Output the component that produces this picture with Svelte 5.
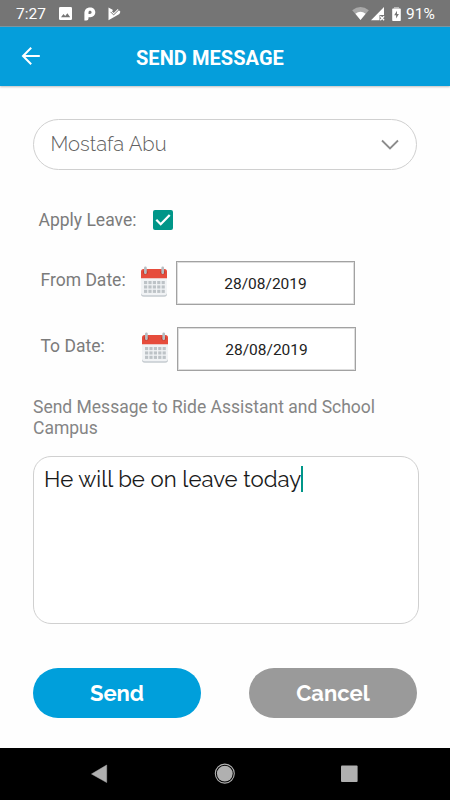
<script lang="ts">
	let recipient = $state('Mostafa Abu');
	let applyLeave = $state(true);
	let message = $state('He will be on leave today');

	const dates = [
		{ id: 'from', label: 'From Date:', value: '28/08/2019' },
		{ id: 'to', label: 'To Date:', value: '28/08/2019' }
	];

	// Day squares on the calendar icon
	const cols = [4, 8.4, 12.8, 17.2, 21.6];
	const rows = [15, 19.4, 23.8];
</script>

<div class="screen">
	<div class="status">
		<span class="clock">7:27</span>
		<svg class="photo" width="13" height="13" viewBox="0 0 13 13">
			<rect width="13" height="13" rx="1.3" fill="#fff" />
			<path d="M2 10.3 4.5 7l1.7 2 2.2-2.8 2.8 4.1z" fill="#757575" />
		</svg>
		<svg class="parking" width="12" height="14" viewBox="0 0 12 14">
			<path d="M.4 13.5V6.3C.4 2.5 2.8.4 6 .4s5.300 2 5.300 4.900-2.200 4.900-4.900 4.900H4.500v1.200q0 2.100-2.100 2.100zM4.500 7h1.300c1.100 0 1.800-.7 1.800-1.700s-.7-1.600-1.600-1.600-1.500.7-1.500 1.700z" fill="#fff" fill-rule="evenodd" />
		</svg>
		<svg class="play" width="13" height="14" viewBox="0 0 13 14">
			<path d="M.5.5 5 3.100 4 4.400l1.700 1.700L9.800 1.900l2.600 2.800-1 2.300L.5 13.300z" fill="#fff" />
			<path d="m2.600 4.900 3 3L11 2.700" fill="none" stroke="#757575" stroke-width="1" />
		</svg>
		<div class="signals">
			<svg class="wifi" width="17" height="13" viewBox="0 0 17 13">
				<path d="M.2 3.200Q8.500-3 16.800 3.200L8.500 13z" fill="#a8a8a8" />
				<path d="M3.400 6.700q5.100-3.700 10.200 0L8.500 13z" fill="#fff" />
			</svg>
			<svg class="cell" width="14" height="14" viewBox="0 0 14 14">
				<path d="M13 0v8H8.500v5.200H0z" fill="#fff" />
				<path d="m9.300 9.300 3.800 4m0-4-3.800 4" stroke="#fff" stroke-width="1.300" />
			</svg>
			<svg class="battery" width="9" height="14" viewBox="0 0 9 14">
				<path d="M2 0h5v1.400H2z" fill="#b5b5b5" />
				<path d="M1 1.400h7q.8 0 .8.800v11q0 .8-.8.800H1q-.8 0-.8-.8v-11q0-.8.8-.8z" fill="#fff" />
				<path d="M5 3.700 2.200 8.200h1.900v3.400L6.900 7H5z" fill="#757575" />
			</svg>
			<span class="percent">91%</span>
		</div>
	</div>

	<header>
		<button class="back" aria-label="Back">
			<svg width="20" height="20" viewBox="0 0 20 20">
				<path d="M18.800 10H2.300M10.200 1.700 2 10l8.200 8.300" fill="none" stroke="#fff" stroke-width="2" />
			</svg>
		</button>
		<h1>SEND MESSAGE</h1>
	</header>

	<main>
		<button class="select">
			<span class="name">{recipient}</span>
			<svg width="18" height="11" viewBox="0 0 18 11">
				<path d="m1 1.500 8 8 8-8" fill="none" stroke="#8c8c8c" stroke-width="1.800" />
			</svg>
		</button>

		<div class="leave">
			<span class="label">Apply Leave:</span>
			<button
				class="check"
				class:on={applyLeave}
				role="checkbox"
				aria-checked={applyLeave}
				aria-label="Apply Leave"
				onclick={() => (applyLeave = !applyLeave)}
			>
				{#if applyLeave}
					<svg width="20" height="20" viewBox="0 0 20 20">
						<path d="m3.300 9.800 4.400 4.400 9-9.200" fill="none" stroke="#fff" stroke-width="2.300" />
					</svg>
				{/if}
			</button>
		</div>

		{#each dates as date (date.id)}
			<div class="date {date.id}">
				<span class="label">{date.label}</span>
				<svg class="calendar" width="28" height="32" viewBox="0 0 28 32">
					<path d="M1 10h26v18q0 2.700-2.700 2.700H3.700Q1 30.700 1 28z" fill="#c5cbd0" />
					<path d="M1 10h26v16.500q0 2.700-2.700 2.700H3.700Q1 29.200 1 26.500z" fill="#f1f3f5" />
					<path d="M1 12.200V5.500Q1 3 3.500 3h21Q27 3 27 5.500v6.700z" fill="#e64c3c" />
					<circle cx="5.400" cy="6.300" r="2.400" fill="#c0392b" />
					<circle cx="22.700" cy="6.300" r="2.400" fill="#c0392b" />
					<path d="M5.400 1.800v5M22.700 1.800v5" stroke="#b7bdc2" stroke-width="2.700" stroke-linecap="round" />
					{#each rows as y}
						{#each cols as x}
							<rect {x} {y} width="3.200" height="3.100" fill="#bdc3c7" />
						{/each}
					{/each}
				</svg>
				<button class="value">{date.value}</button>
			</div>
		{/each}

		<p class="caption">Send Message to Ride Assistant and School Campus</p>

		<div class="message">
			<span class="text">{message}</span><span class="caret"></span>
		</div>

		<div class="actions">
			<button class="send">Send</button>
			<button class="cancel">Cancel</button>
		</div>
	</main>

	<nav>
		<svg width="450" height="52" viewBox="0 0 450 52" fill="#b0b0b0">
			<path d="M106.700 17v17.500L91.500 26z" stroke="#b0b0b0" stroke-width=".5" stroke-linejoin="round" />
			<circle cx="224.800" cy="25.600" r="7.900" />
			<circle cx="224.800" cy="25.600" r="9.500" fill="none" stroke="#b0b0b0" stroke-width="1.100" />
			<rect x="341" y="17.500" width="16.600" height="16.500" rx="1" />
		</svg>
	</nav>
</div>

<style>
	:global(body) {
		margin: 0;
	}
	.screen {
		width: 450px;
		height: 800px;
		display: flex;
		flex-direction: column;
		background: #fefefe;
		font-family: Roboto, sans-serif;
		overflow: hidden;
	}
	button {
		margin: 0;
		padding: 0;
		border: 0;
		background: none;
		font: inherit;
	}
	svg {
		display: block;
		flex: none;
	}
	.status {
		box-sizing: border-box;
		height: 27px;
		display: flex;
		align-items: center;
		padding: 1px 15px 0 16px;
		background: #757575;
		border-bottom: 1px solid #7d98a5;
		color: #fff;
		font-size: 15.5px;
	}
	.clock {
		width: 43px;
	}
	.parking {
		margin-left: 12px;
	}
	.play {
		margin-left: 12px;
	}
	.signals {
		display: flex;
		align-items: center;
		margin-left: auto;
	}
	.cell {
		margin-left: 2px;
	}
	.battery {
		margin: 0 5px 0 7px;
	}
	.percent {
		width: 29px;
	}
	header {
		box-sizing: border-box;
		height: 59px;
		flex: none;
		display: flex;
		align-items: center;
		padding-left: 21px;
		background: #059edb;
		box-shadow: 0 1px 2px #00000040;
		color: #fff;
	}
	.back {
		width: 20px;
		height: 20px;
		margin-top: -1px;
	}
	h1 {
		margin: 2px 0 0 95px;
		font-size: 20px;
		font-weight: 700;
		line-height: 24px;
		letter-spacing: 0.06px;
		white-space: nowrap;
	}
	main {
		flex: 1;
		padding: 33px 33px 0;
	}
	.select {
		box-sizing: border-box;
		width: 384px;
		height: 51px;
		display: flex;
		align-items: center;
		justify-content: space-between;
		padding: 0 17px 0 16.5px;
		border: 1px solid #d0d0d0;
		border-radius: 26px;
		background: #fff;
	}
	.name {
		margin-top: -2px;
		font-family: Raleway, Lato, sans-serif;
		font-size: 20.2px;
		font-weight: 300;
		color: #606060;
		white-space: nowrap;
	}
	.leave {
		display: flex;
		align-items: center;
		height: 20px;
		margin: 40px 0 0 5.5px;
	}
	.label {
		flex: none;
		font-size: 17.5px;
		line-height: 22px;
		color: #7b7b7b;
		white-space: nowrap;
	}
	.leave .label {
		width: 114.5px;
	}
	.check {
		width: 20px;
		height: 20px;
		border-radius: 2px;
		box-shadow: inset 0 0 0 2px #757575;
	}
	.check.on {
		background: #009688;
		box-shadow: none;
	}
	.date {
		display: flex;
		height: 44px;
		margin: 31px 0 0 7.5px;
	}
	.date.to {
		margin-top: 22px;
	}
	.date .label {
		width: 99.5px;
		margin-top: 8px;
	}
	.calendar {
		margin-top: 5px;
	}
	.value {
		box-sizing: border-box;
		width: 179px;
		height: 44px;
		margin-left: 8px;
		padding-top: 2px;
		border: 1px solid #a2a2a2;
		box-shadow: inset 0 0 0 1px #dedede;
		background: #fff;
		color: #222;
		font-size: 15.5px;
	}
	.to .calendar {
		margin-left: 1px;
	}
	.caption {
		width: 384px;
		margin: 26px 0 0;
		font-size: 17.5px;
		line-height: 20.5px;
		color: #858585;
	}
	.message {
		box-sizing: border-box;
		display: flex;
		width: 386px;
		height: 168px;
		margin-top: 18px;
		padding: 9px 10px;
		border: 1px solid #d0d0d0;
		border-radius: 18px;
		background: #fff;
	}
	.text {
		font-family: Raleway, Lato, sans-serif;
		font-size: 22.2px;
		font-weight: 400;
		line-height: 27px;
		color: #1a1a1a;
		white-space: nowrap;
	}
	.caret {
		width: 2px;
		height: 26px;
		background: #009688;
	}
	.actions {
		display: flex;
		justify-content: space-between;
		width: 384px;
		margin-top: 44px;
	}
	.actions button {
		width: 168px;
		height: 50px;
		padding-bottom: 1px;
		border-radius: 25px;
		color: #fff;
		font-family: Raleway, Lato, sans-serif;
		font-size: 22px;
		font-weight: 700;
	}
	.actions .send {
		background: #009fdb;
	}
	.actions .cancel {
		background: #9a9a9a;
	}
	nav {
		height: 52px;
		flex: none;
		background: #000;
	}
</style>
